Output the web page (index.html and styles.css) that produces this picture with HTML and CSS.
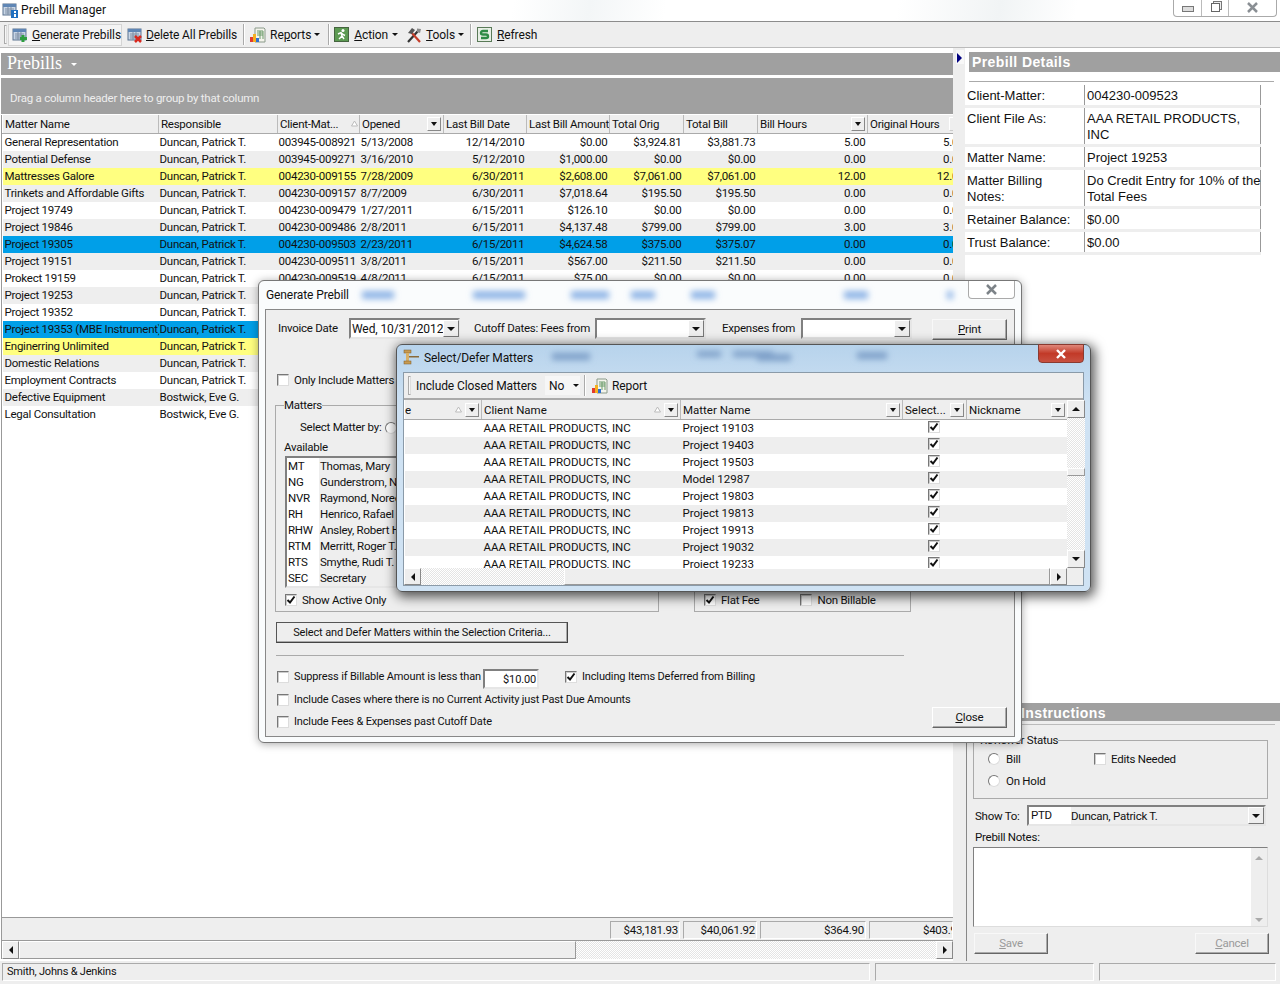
FILE: index.html
```html
<!DOCTYPE html>
<html lang="en">
<head>
  <meta charset="UTF-8">
  <title>Prebill Manager</title>
  <link rel="stylesheet" href="styles.css">
</head>
<body>
  <svg class="defs" width="0" height="0">
    <symbol id="check" viewBox="0 0 12 12"><path d="M2.500 6 L5 8.500 L9.500 2.500" fill="none" stroke="#111" stroke-width="2"/></symbol>
    <symbol id="sheet" viewBox="0 0 16 16">
      <rect x="1" y="2" width="13" height="11" fill="#c9d6e6" stroke="#5b7390"/>
      <rect x="1" y="2" width="13" height="3" fill="#5f86b5"/>
      <path d="M3 7h9M3 9h9M3 11h9M6 5v8M9 5v8" stroke="#7e8fa5" stroke-width="1"/>
    </symbol>
    <symbol id="bars" viewBox="0 0 16 16">
      <path d="M5 1h9l1 1v13H5z" fill="#f4f4ec" stroke="#8a9a8a"/>
      <path d="M7 4h6M7 6h6M7 8h6M10 4v8M13 4v8" stroke="#6a9a6a"/>
      <rect x="0" y="10" width="3" height="5" fill="#e23b2e"/>
      <rect x="3" y="7" width="3" height="8" fill="#f4b020"/>
      <rect x="6" y="11" width="3" height="4" fill="#2f6fd0"/>
    </symbol>
    <symbol id="updown" viewBox="0 0 7 7"><path d="M3.500 1 L6.500 6 H0.500Z" fill="#fff" stroke="#bbb"/></symbol>
  </svg>

  <div class="app">
    <div class="titlebar">
      <svg class="app-icon" width="16" height="16" viewBox="0 0 16 16">
        <use href="#sheet"/>
        <rect x="9" y="8" width="7" height="8" fill="#1f6fc0"/>
        <rect x="12" y="9" width="2" height="2" fill="#fff"/>
        <rect x="12" y="12" width="2" height="3" fill="#fff"/>
      </svg>
      <span class="title-text">Prebill Manager</span>
      <div class="win-buttons">
        <span class="win-btn win-min"><i></i></span>
        <span class="win-btn win-max"><i></i></span>
        <span class="win-btn win-close">
          <svg width="13" height="11" viewBox="0 0 13 11"><path d="M2 1 L11 10 M11 1 L2 10" stroke="#8a8f94" stroke-width="2.500" fill="none"/></svg>
        </span>
      </div>
    </div>

    <div class="toolbar">
      <span class="grip"></span>
      <div class="tool tool-hover">
        <svg width="16" height="16" viewBox="0 0 16 16"><use href="#sheet"/><path d="M11 8v7M8 11.500h7" stroke="#2e9e40" stroke-width="3"/></svg>
        <span><u>G</u>enerate Prebills</span>
      </div>
      <div class="tool tool-delete">
        <svg width="16" height="16" viewBox="0 0 16 16"><use href="#sheet"/><path d="M8 9l6 6M14 9l-6 6" stroke="#d9281e" stroke-width="2.500"/></svg>
        <span><u>D</u>elete All Prebills</span>
      </div>
      <span class="tool-sep sep-a"></span>
      <div class="tool tool-reports">
        <svg width="16" height="16" viewBox="0 0 16 16"><use href="#bars"/></svg>
        <span>Re<u>p</u>orts</span><b class="drop"></b>
      </div>
      <span class="tool-sep sep-b"></span>
      <div class="tool tool-action">
        <svg width="15" height="15" viewBox="0 0 15 15">
          <rect x="0.500" y="0.500" width="14" height="14" fill="#5c9a52" stroke="#45643f"/>
          <circle cx="9" cy="3.500" r="1.500" fill="#fff"/>
          <path d="M4 7l3-1.500 2 2 2 1M7 6l1 3-3 3M8 9l2 3" stroke="#fff" stroke-width="1.400" fill="none"/>
        </svg>
        <span><u>A</u>ction</span><b class="drop"></b>
      </div>
      <div class="tool tool-tools">
        <svg width="16" height="16" viewBox="0 0 16 16">
          <path d="M2 15 L12 4" stroke="#333" stroke-width="2.200"/>
          <path d="M14 15 L5 5" stroke="#c43d2a" stroke-width="2.200"/>
          <path d="M2 6 L6 1 L9 3 L6 7z" fill="#555"/>
          <path d="M11 1.500 L15 2 L14 6 L11 5z" fill="#8a8a8a"/>
        </svg>
        <span><u>T</u>ools</span><b class="drop"></b>
      </div>
      <span class="tool-sep sep-c"></span>
      <div class="tool tool-refresh">
        <svg width="15" height="15" viewBox="0 0 15 15">
          <rect x="0.500" y="0.500" width="14" height="14" fill="#e8efe6" stroke="#5a7a58"/>
          <path d="M11 4 H6 Q4 4 4 6 Q4 7.500 6 7.500 H9 Q11 7.500 11 9.500 Q11 11 9 11 H4" fill="none" stroke="#2e8a46" stroke-width="2.400"/>
        </svg>
        <span><u>R</u>efresh</span>
      </div>
    </div>

    <div class="main">
      <div class="left">
        <div class="section-head">Prebills <b class="drop drop-white"></b></div>
        <div class="group-panel">Drag a column header here to group by that column</div>
        <div class="grid-wrap">
          <table class="grid">
            <colgroup>
              <col class="c1"><col class="c2"><col class="c3"><col class="c4"><col class="c5">
              <col class="c6"><col class="c7"><col class="c8"><col class="c9"><col class="c10">
            </colgroup>
            <thead>
              <tr>
                <th>Matter Name</th>
                <th>Responsible</th>
                <th><span class="th-in">Client-Mat...<svg class="sort" width="7" height="7"><use href="#updown"/></svg></span></th>
                <th><span class="th-in">Opened<i class="hdr-drop"></i></span></th>
                <th>Last Bill Date</th>
                <th>Last Bill Amount</th>
                <th>Total Orig</th>
                <th>Total Bill</th>
                <th><span class="th-in">Bill Hours<i class="hdr-drop"></i></span></th>
                <th><span class="th-in">Original Hours<i class="hdr-drop hdr-faint"></i></span></th>
              </tr>
            </thead>
            <tbody>
              <tr><td>General Representation</td><td>Duncan, Patrick T.</td><td>003945-008921</td><td>5/13/2008</td><td class="num">12/14/2010</td><td class="num">$0.00</td><td class="num">$3,924.81</td><td class="num">$3,881.73</td><td class="num">5.00</td><td class="num">5.00</td></tr>
              <tr><td>Potential Defense</td><td>Duncan, Patrick T.</td><td>003945-009271</td><td>3/16/2010</td><td class="num">5/12/2010</td><td class="num">$1,000.00</td><td class="num">$0.00</td><td class="num">$0.00</td><td class="num">0.00</td><td class="num">0.00</td></tr>
              <tr class="flag"><td>Mattresses Galore</td><td>Duncan, Patrick T.</td><td>004230-009155</td><td>7/28/2009</td><td class="num">6/30/2011</td><td class="num">$2,608.00</td><td class="num">$7,061.00</td><td class="num">$7,061.00</td><td class="num">12.00</td><td class="num">12.00</td></tr>
              <tr><td>Trinkets and Affordable Gifts</td><td>Duncan, Patrick T.</td><td>004230-009157</td><td>8/7/2009</td><td class="num">6/30/2011</td><td class="num">$7,018.64</td><td class="num">$195.50</td><td class="num">$195.50</td><td class="num">0.00</td><td class="num">0.00</td></tr>
              <tr><td>Project 19749</td><td>Duncan, Patrick T.</td><td>004230-009479</td><td>1/27/2011</td><td class="num">6/15/2011</td><td class="num">$126.10</td><td class="num">$0.00</td><td class="num">$0.00</td><td class="num">0.00</td><td class="num">0.00</td></tr>
              <tr><td>Project 19846</td><td>Duncan, Patrick T.</td><td>004230-009486</td><td>2/8/2011</td><td class="num">6/15/2011</td><td class="num">$4,137.48</td><td class="num">$799.00</td><td class="num">$799.00</td><td class="num">3.00</td><td class="num">3.00</td></tr>
              <tr class="sel"><td>Project 19305</td><td>Duncan, Patrick T.</td><td>004230-009503</td><td>2/23/2011</td><td class="num">6/15/2011</td><td class="num">$4,624.58</td><td class="num">$375.00</td><td class="num">$375.07</td><td class="num">0.00</td><td class="num">0.00</td></tr>
              <tr><td>Project 19151</td><td>Duncan, Patrick T.</td><td>004230-009511</td><td>3/8/2011</td><td class="num">6/15/2011</td><td class="num">$567.00</td><td class="num">$211.50</td><td class="num">$211.50</td><td class="num">0.00</td><td class="num">0.00</td></tr>
              <tr><td>Prokect 19159</td><td>Duncan, Patrick T.</td><td>004230-009519</td><td>4/8/2011</td><td class="num">6/15/2011</td><td class="num">$75.00</td><td class="num">$0.00</td><td class="num">$0.00</td><td class="num">0.00</td><td class="num">0.00</td></tr>
              <tr><td>Project 19253</td><td>Duncan, Patrick T.</td><td colspan="8"></td></tr>
              <tr><td>Project 19352</td><td>Duncan, Patrick T.</td><td colspan="8"></td></tr>
              <tr class="sel"><td>Project 19353 (MBE Instrument)</td><td>Duncan, Patrick T.</td><td colspan="8"></td></tr>
              <tr class="flag"><td>Enginerring Unlimited</td><td>Duncan, Patrick T.</td><td colspan="8"></td></tr>
              <tr><td>Domestic Relations</td><td>Duncan, Patrick T.</td><td colspan="8"></td></tr>
              <tr><td>Employment Contracts</td><td>Duncan, Patrick T.</td><td colspan="8"></td></tr>
              <tr><td>Defective Equipment</td><td>Bostwick, Eve G.</td><td colspan="8"></td></tr>
              <tr><td>Legal Consultation</td><td>Bostwick, Eve G.</td><td colspan="8"></td></tr>
            </tbody>
          </table>
        </div>
        <div class="totals">
          <span class="total t1">$43,181.93</span>
          <span class="total t2">$40,061.92</span>
          <span class="total t3">$364.90</span>
          <span class="total t4"><em>$403.90</em></span>
        </div>
        <div class="hscroll">
          <span class="sb-btn"><i class="arr-l"></i></span>
          <span class="sb-thumb main-thumb"></span>
          <span class="sb-track"></span>
          <span class="sb-btn"><i class="arr-r"></i></span>
        </div>
      </div>

      <div class="splitter"><span class="split-tab"><i></i></span></div>

      <div class="right">
        <div class="details">
          <div class="details-head">Prebill Details</div>
          <div class="details-rule"></div>
          <div class="details-table">
            <div class="d-row"><div class="d-label">Client-Matter:</div><div class="d-value">004230-009523</div></div>
            <div class="d-row d-tall"><div class="d-label">Client File As:</div><div class="d-value">AAA RETAIL PRODUCTS,<br>INC</div></div>
            <div class="d-row"><div class="d-label">Matter Name:</div><div class="d-value">Project 19253</div></div>
            <div class="d-row d-tall"><div class="d-label">Matter Billing<br>Notes:</div><div class="d-value">Do Credit Entry for 10% of the<br>Total Fees</div></div>
            <div class="d-row"><div class="d-label">Retainer Balance:</div><div class="d-value">$0.00</div></div>
            <div class="d-row"><div class="d-label">Trust Balance:</div><div class="d-value">$0.00</div></div>
          </div>
        </div>

        <div class="instructions">
          <div class="details-head instr-head">Instructions</div>
          <div class="instr-body">
            <fieldset class="review">
              <legend>Reviewer Status</legend>
              <div class="review-grid">
                <label class="opt"><i class="radio"></i>Bill</label>
                <label class="opt"><i class="cb"></i>Edits Needed</label>
                <label class="opt"><i class="radio"></i>On Hold</label>
              </div>
            </fieldset>
            <div class="show-to">
              <span class="show-label">Show To:</span>
              <div class="sunken show-box">
                <span class="show-code">PTD</span><span class="show-name">Duncan, Patrick T.</span><i class="combo-btn"></i>
              </div>
            </div>
            <div class="notes-label">Prebill Notes:</div>
            <div class="notes">
              <div class="notes-text"></div>
              <div class="notes-scroll"><i class="arr-u grey"></i><i class="arr-d grey"></i></div>
            </div>
            <div class="notes-buttons">
              <span class="btn btn-off"><u>S</u>ave</span>
              <span class="btn btn-off"><u>C</u>ancel</span>
            </div>
          </div>
        </div>
      </div>
    </div>

    <div class="statusbar">
      <span class="status s1">Smith, Johns &amp; Jenkins</span>
      <span class="status s2"></span>
      <span class="status s3"></span>
    </div>
  </div>

  <!-- Generate Prebill window -->
  <div class="window gen">
    <svg class="glass" width="764" height="29">
      <filter id="blur1" x="-30%" y="-100%" width="160%" height="300%"><feGaussianBlur stdDeviation="3"/></filter>
      <g fill="#8db4e6" filter="url(#blur1)">
        <rect x="103" y="10" width="32" height="8"/><rect x="214" y="10" width="52" height="8"/>
        <rect x="312" y="10" width="38" height="8"/><rect x="372" y="10" width="24" height="8"/>
        <rect x="432" y="10" width="24" height="8"/><rect x="585" y="10" width="24" height="8"/>
        <rect x="688" y="10" width="6" height="8"/>
      </g>
    </svg>
    <div class="window-title gen-title">Generate Prebill</div>
    <span class="gen-close">
      <svg width="13" height="11" viewBox="0 0 13 11"><path d="M2 1 L11 10 M11 1 L2 10" stroke="#7d8388" stroke-width="2.500" fill="none"/></svg>
    </span>
    <div class="gen-body">
      <div class="gen-top">
        <span class="lbl-date">Invoice Date</span>
        <div class="sunken combo date-box">Wed, 10/31/2012<i class="combo-btn"></i></div>
        <span class="lbl-cutoff">Cutoff Dates: Fees from</span>
        <div class="sunken combo"><i class="combo-btn"></i></div>
        <span class="lbl-exp">Expenses from</span>
        <div class="sunken combo"><i class="combo-btn"></i></div>
        <span class="btn btn-print"><u>P</u>rint</span>
      </div>
      <label class="opt gen-only"><i class="cb"></i>Only Include Matters</label>
      <div class="gen-mid">
        <fieldset class="matters">
          <legend>Matters</legend>
          <div class="select-by">Select Matter by: <i class="radio"></i></div>
          <div class="avail">Available</div>
          <div class="sunken avail-list">
            <div class="av"><span>MT</span><span>Thomas, Mary</span></div>
            <div class="av"><span>NG</span><span>Gunderstrom, Nate</span></div>
            <div class="av"><span>NVR</span><span>Raymond, Noreen</span></div>
            <div class="av"><span>RH</span><span>Henrico, Rafael</span></div>
            <div class="av"><span>RHW</span><span>Ansley, Robert H.</span></div>
            <div class="av"><span>RTM</span><span>Merritt, Roger T.</span></div>
            <div class="av"><span>RTS</span><span>Smythe, Rudi T.</span></div>
            <div class="av"><span>SEC</span><span>Secretary</span></div>
          </div>
          <label class="opt active-only"><i class="cb"><svg width="12" height="12"><use href="#check"/></svg></i>Show Active Only</label>
        </fieldset>
        <fieldset class="types">
          <label class="opt"><i class="cb"><svg width="12" height="12"><use href="#check"/></svg></i>Flat Fee</label>
          <label class="opt"><i class="cb"></i>Non Billable</label>
        </fieldset>
      </div>
      <span class="btn btn-default">Select and Defer Matters within the Selection Criteria...</span>
      <div class="gen-rule"></div>
      <div class="gen-bottom">
        <div class="gen-opts">
          <div class="suppress">
            <label class="opt opt-suppress"><i class="cb"></i>Suppress if Billable Amount is less than</label>
            <span class="sunken amount">$10.00</span>
            <label class="opt"><i class="cb"><svg width="12" height="12"><use href="#check"/></svg></i>Including Items Deferred from Billing</label>
          </div>
          <label class="opt opt-cases"><i class="cb"></i>Include Cases where there is no Current Activity just Past Due Amounts</label>
          <label class="opt opt-fees"><i class="cb"></i>Include Fees &amp; Expenses past Cutoff Date</label>
        </div>
        <span class="btn btn-close"><u>C</u>lose</span>
      </div>
    </div>
  </div>

  <!-- Select/Defer Matters window -->
  <div class="window sel-win">
    <svg class="glass" width="695" height="28">
      <filter id="blur2" x="-30%" y="-100%" width="160%" height="300%"><feGaussianBlur stdDeviation="3"/></filter>
      <g fill="#7d9fc8" filter="url(#blur2)">
        <rect x="155" y="8" width="38" height="7"/><rect x="360" y="9" width="34" height="7"/>
        <rect x="300" y="6" width="24" height="6"/><rect x="336" y="6" width="40" height="6"/>
        <rect x="460" y="7" width="30" height="7"/>
      </g>
    </svg>
    <div class="sel-head">
      <svg width="16" height="17" viewBox="0 0 16 17">
        <rect x="1" y="1" width="7" height="3" fill="#c89a50" stroke="#7a5a2a" stroke-width="0.500"/>
        <rect x="3" y="4" width="3" height="8" fill="#d8b068"/>
        <rect x="1" y="12" width="7" height="3" fill="#c89a50" stroke="#7a5a2a" stroke-width="0.500"/>
        <rect x="6" y="7" width="10" height="1.500" fill="#8a6a3a"/>
      </svg>
      <span class="window-title">Select/Defer Matters</span>
      <span class="sel-close">
        <svg width="12" height="10" viewBox="0 0 12 10"><path d="M2 1 L10 9 M10 1 L2 9" stroke="#fff" stroke-width="2.400" fill="none"/></svg>
      </span>
    </div>
    <div class="sel-body">
      <div class="sel-toolbar">
        <span class="grip"></span>
        <span class="inc-label">Include Closed Matters</span>
        <span class="inc-value">No<b class="drop"></b></span>
        <span class="tool-sep"></span>
        <svg width="16" height="16" viewBox="0 0 16 16"><use href="#bars"/></svg>
        <span>Report</span>
      </div>
      <div class="sel-gridbox">
        <div class="sel-gridcol">
          <div class="sel-clip">
            <table class="grid sel-grid">
              <colgroup><col class="s1c"><col class="s2c"><col class="s3c"><col class="s4c"><col class="s5c"></colgroup>
              <thead>
                <tr>
                  <th class="clip-left"><span class="th-in"><span>e</span><svg class="sort" width="7" height="7"><use href="#updown"/></svg><i class="hdr-drop"></i></span></th>
                  <th><span class="th-in">Client Name<svg class="sort" width="7" height="7"><use href="#updown"/></svg><i class="hdr-drop"></i></span></th>
                  <th><span class="th-in">Matter Name<i class="hdr-drop"></i></span></th>
                  <th><span class="th-in">Select...<i class="hdr-drop"></i></span></th>
                  <th><span class="th-in">Nickname<i class="hdr-drop"></i></span></th>
                </tr>
              </thead>
              <tbody>
                <tr><td></td><td>AAA RETAIL PRODUCTS, INC</td><td>Project 19103</td><td class="mid"><i class="cb"><svg width="12" height="12"><use href="#check"/></svg></i></td><td></td></tr>
                <tr><td></td><td>AAA RETAIL PRODUCTS, INC</td><td>Project 19403</td><td class="mid"><i class="cb"><svg width="12" height="12"><use href="#check"/></svg></i></td><td></td></tr>
                <tr><td></td><td>AAA RETAIL PRODUCTS, INC</td><td>Project 19503</td><td class="mid"><i class="cb"><svg width="12" height="12"><use href="#check"/></svg></i></td><td></td></tr>
                <tr><td></td><td>AAA RETAIL PRODUCTS, INC</td><td>Model 12987</td><td class="mid"><i class="cb"><svg width="12" height="12"><use href="#check"/></svg></i></td><td></td></tr>
                <tr><td></td><td>AAA RETAIL PRODUCTS, INC</td><td>Project 19803</td><td class="mid"><i class="cb"><svg width="12" height="12"><use href="#check"/></svg></i></td><td></td></tr>
                <tr><td></td><td>AAA RETAIL PRODUCTS, INC</td><td>Project 19813</td><td class="mid"><i class="cb"><svg width="12" height="12"><use href="#check"/></svg></i></td><td></td></tr>
                <tr><td></td><td>AAA RETAIL PRODUCTS, INC</td><td>Project 19913</td><td class="mid"><i class="cb"><svg width="12" height="12"><use href="#check"/></svg></i></td><td></td></tr>
                <tr><td></td><td>AAA RETAIL PRODUCTS, INC</td><td>Project 19032</td><td class="mid"><i class="cb"><svg width="12" height="12"><use href="#check"/></svg></i></td><td></td></tr>
                <tr><td></td><td>AAA RETAIL PRODUCTS, INC</td><td>Project 19233</td><td class="mid"><i class="cb"><svg width="12" height="12"><use href="#check"/></svg></i></td><td></td></tr>
              </tbody>
            </table>
          </div>
          <div class="hscroll sel-h">
            <span class="sb-btn"><i class="arr-l"></i></span>
            <span class="sb-track sel-track"></span>
            <span class="sb-thumb"></span>
            <span class="sb-btn"><i class="arr-r"></i></span>
          </div>
        </div>
        <div class="vscroll">
          <span class="sb-btn v-btn"><i class="arr-u"></i></span>
          <span class="sb-track v-track1"></span>
          <span class="sb-thumb v-thumb"></span>
          <span class="sb-track v-track2"></span>
          <span class="sb-btn v-btn"><i class="arr-d"></i></span>
          <span class="v-corner"></span>
        </div>
      </div>
    </div>
  </div>
</body>
</html>
```

FILE: styles.css
```css
:root {
  --panel: #eeeeee;
  --head: #a0a0a0;
  --line: #999;
  --flag: #ffff80;
  --select: #009fe8;
}

* {
  box-sizing: border-box;
}

body {
  margin: 0;
  width: 1280px;
  height: 984px;
  overflow: hidden;
  background: #fff;
  font-family: Roboto, "Liberation Sans", sans-serif;
  font-size: 11.5px;
  letter-spacing: -0.25px;
  color: #111;
}

.defs {
  display: none;
}

i, em {
  font-style: normal;
}

.app {
  display: flex;
  flex-direction: column;
  height: 984px;
}

/* title bar */
.titlebar {
  display: flex;
  align-items: center;
  height: 22px;
  padding: 0 0 1px 2px;
  border-bottom: 1px solid #8c8c8c;
  background: linear-gradient(100deg, #fff 0 40%, #f3f6f7 46%, #fff 52% 70%, #f1f4f5 78%, #fff 84%);
}

.app-icon {
  margin-right: 3px;
}

.title-text {
  font-size: 12px;
  letter-spacing: 0.1px;
}

.win-buttons {
  display: flex;
  margin-left: auto;
  margin-right: 3px;
  margin-top: -5px;
  height: 18px;
  border: 1px solid #aaa;
  border-top: 0;
  border-radius: 0 0 4px 4px;
}

.win-btn {
  display: flex;
  align-items: center;
  justify-content: center;
  height: 17px;
}

.win-min { width: 28px; border-right: 1px solid #bbb; }
.win-max { width: 27px; border-right: 1px solid #bbb; }
.win-close { width: 47px; }

.win-min i {
  width: 12px;
  height: 6px;
  border: 1px solid #777;
  background: #ddd;
  margin-top: 3px;
}

.win-max i {
  width: 9px;
  height: 9px;
  border: 1px solid #666;
  box-shadow: 2px -2px 0 -1px #eee, 2px -2px 0 0 #777;
}

/* toolbar */
.toolbar {
  position: relative;
  display: flex;
  align-items: center;
  height: 26px;
  padding-left: 4px;
  background: var(--panel);
  border-bottom: 1px solid #bbb;
  font-size: 12px;
  letter-spacing: -0.1px;
}

.grip {
  width: 3px;
  height: 19px;
  border: 1px solid #aaa;
  border-right-color: #ddd;
  background: #f6f6f6;
  margin-right: 1px;
}

.tool {
  display: flex;
  align-items: center;
  gap: 4px;
  height: 22px;
  white-space: nowrap;
}

.tool-hover {
  width: 114px;
  padding-left: 3px;
  background: #f4f4f4;
  border: 1px solid #d4d4d4;
  margin-top: 1px;
}

.tool-delete { margin-left: 5px; gap: 3px; }
.tool-reports { margin-left: 5px; }
.tool-action { margin-left: 4px; gap: 5px; }
.tool-tools { margin-left: 8px; }
.tool-refresh { margin-left: 5px; gap: 5px; }

.tool-sep {
  width: 2px;
  height: 21px;
  border-left: 1px solid #aaa;
  border-right: 1px solid #fff;
}

.sep-a { margin-left: 6px; }
.sep-b { margin-left: 8px; }
.sep-c { margin-left: 6px; }

.drop {
  display: inline-block;
  width: 0;
  height: 0;
  margin-left: -1px;
  border-left: 3px solid transparent;
  border-right: 3px solid transparent;
  border-top: 3px solid #111;
}

.drop-white {
  margin-left: 4px;
  border-top-color: #fff;
  vertical-align: middle;
}

/* main area */
.main {
  display: flex;
  height: 913px;
}

.left {
  display: flex;
  flex-direction: column;
  width: 953px;
  padding: 5px 0 2px 1px;
  background: #fff;
}

.section-head {
  height: 22px;
  line-height: 20px;
  padding-left: 6px;
  background: var(--head);
  color: #fff;
  font-family: "Liberation Serif", serif;
  font-size: 18px;
  letter-spacing: 0;
}

.group-panel {
  height: 36px;
  margin-top: 3px;
  padding: 13px 0 0 9px;
  background: var(--head);
  color: #eee;
}

.grid-wrap {
  flex: 1;
  margin-top: 1px;
  overflow: hidden;
  border-left: 1px solid var(--line);
  border-bottom: 1px solid var(--line);
}

.grid {
  table-layout: fixed;
  border-collapse: collapse;
  width: 964px;
}

.c1 { width: 156px; }
.c2 { width: 119px; }
.c3 { width: 82px; }
.c4 { width: 84px; }
.c5 { width: 83px; }
.c6 { width: 83px; }
.c7 { width: 74px; }
.c8 { width: 74px; }
.c9 { width: 110px; }
.c10 { width: 99px; }

.grid th {
  height: 18px;
  padding: 0 1px 0 2px;
  background: var(--panel);
  border-right: 1px solid #bbb;
  border-bottom: 1px solid #aaa;
  border-left: 1px solid #fff;
  font-weight: normal;
  text-align: left;
  white-space: nowrap;
  overflow: hidden;
}

.th-in {
  display: flex;
  align-items: center;
}

.hdr-drop {
  position: relative;
  display: block;
  width: 14px;
  height: 14px;
  margin-left: auto;
  margin-right: 1px;
  border: 1px solid;
  border-color: #fff #888 #888 #fff;
  flex: none;
}

.hdr-drop::after {
  content: "";
  position: absolute;
  left: 3px;
  top: 4px;
  border-left: 3px solid transparent;
  border-right: 3px solid transparent;
  border-top: 4px solid #111;
}

.hdr-faint {
  margin-left: 9px;
  border-color: #fff #ccc #ccc #fff;
}

.hdr-faint::after {
  display: none;
}

.sort {
  margin-left: auto;
  flex: none;
}

.grid td {
  height: 17px;
  padding: 0 2px 0 1px;
  white-space: nowrap;
  overflow: hidden;
  line-height: 17px;
}

.grid td:first-child {
  padding-left: 2px;
}

.grid tbody tr:nth-child(even) { background: var(--panel); }
.grid tbody tr.flag { background: var(--flag); }
.grid tbody tr.sel { background: var(--select); }

.grid td.num { text-align: right; }

.totals {
  display: flex;
  justify-content: flex-end;
  gap: 3px;
  height: 23px;
  padding: 3px 0 1px;
  background: var(--panel);
  border-left: 1px solid var(--line);
  border-bottom: 1px solid var(--line);
  overflow: hidden;
}

.total {
  height: 18px;
  line-height: 17px;
  padding-right: 1px;
  text-align: right;
  border-left: 1px solid #aaa;
  border-top: 1px solid #aaa;
  border-right: 1px solid #fff;
  border-bottom: 1px solid #fff;
}

.t1 { width: 70px; }
.t2 { width: 74px; }
.t3 { width: 106px; }
.t4 { width: 84px; overflow: hidden; white-space: nowrap; }
.t4 em { display: block; width: 93px; text-align: right; }

.hscroll {
  display: flex;
  height: 18px;
  border-left: 1px solid var(--line);
}

.sb-btn {
  display: flex;
  align-items: center;
  justify-content: center;
  width: 17px;
  flex: none;
  background: var(--panel);
  border: 1px solid;
  border-color: #fff #888 #888 #fff;
}

.sb-thumb {
  background: var(--panel);
  border: 1px solid;
  border-color: #fff #999 #999 #fff;
}

.main-thumb { width: 557px; }

.sb-track {
  flex: 1;
  background: repeating-conic-gradient(#fff 0 25%, #e4e4e4 0 50%) 0 0 / 2px 2px;
}

.arr-l, .arr-r, .arr-u, .arr-d {
  width: 0;
  height: 0;
  display: block;
}

.arr-l { border: 4px solid transparent; border-left: 0; border-right: 4px solid #111; }
.arr-r { border: 4px solid transparent; border-right: 0; border-left: 4px solid #111; }
.arr-u { border: 4px solid transparent; border-top: 0; border-bottom: 4px solid #111; }
.arr-d { border: 4px solid transparent; border-bottom: 0; border-top: 4px solid #111; }
.arr-u.grey { border-bottom-color: #aaa; }
.arr-d.grey { border-top-color: #aaa; }

.splitter {
  width: 12px;
  padding: 2px 0 0 3px;
  background: var(--panel);
}

.split-tab {
  display: block;
  width: 8px;
  height: 14px;
  padding: 3px 0 0 1px;
  background: #f8f8f8;
}

.split-tab i {
  display: block;
  width: 0;
  height: 0;
  border: 5px solid transparent;
  border-right: 0;
  border-left: 5px solid #000080;
}

/* right side */
.right {
  display: flex;
  flex-direction: column;
  width: 315px;
}

.details {
  flex: 1;
  padding-top: 4px;
  background: #fff;
}

.details-head {
  height: 20px;
  margin-left: 4px;
  padding-left: 3px;
  background: var(--head);
  color: #fff;
  font-family: "Liberation Sans", sans-serif;
  font-size: 14px;
  font-weight: bold;
  line-height: 21px;
  letter-spacing: 0.4px;
}

.details-rule {
  height: 1px;
  width: 305px;
  margin: 9px 0 3px 4px;
  background: #aaa;
}

.details-table {
  width: 296px;
  padding-bottom: 3px;
  background: var(--panel);
  font-size: 13px;
  font-family: "Liberation Sans", sans-serif;
  line-height: 16px;
  letter-spacing: 0;
  white-space: nowrap;
}

.d-row {
  display: flex;
  min-height: 20px;
  background: #fff;
  margin-bottom: 3px;
}

.d-row:last-child {
  margin-bottom: 0;
}

.d-tall {
  height: 36px;
}

.d-label {
  width: 120px;
  flex: none;
  padding: 3px 4px 0 2px;
  border-right: 1px solid #999;
}

.d-value {
  flex: 1;
  padding: 3px 0 0 2px;
  border-right: 1px solid #999;
}

.instructions {
  height: 258px;
  background: var(--panel);
}

.instr-head {
  margin-left: 0;
  padding-left: 56px;
  height: 18px;
  line-height: 20px;
}

.instr-body {
  position: relative;
  height: 240px;
  margin-left: 1px;
  padding: 12px 12px 0 6px;
  border-left: 1px solid #888;
}

.instr-body::before {
  content: "";
  position: absolute;
  left: 0;
  right: 5px;
  top: 3px;
  height: 1px;
  background: #bbb;
}

.review {
  margin: 0;
  width: 295px;
  height: 66px;
  border: 1px solid #aaa;
  padding: 5px 0 0 14px;
}

.review legend {
  padding: 0;
  margin-left: -8px;
}

.review-grid {
  display: grid;
  grid-template-columns: 106px auto;
  row-gap: 8px;
}

.opt {
  display: flex;
  align-items: center;
  gap: 5px;
  line-height: 14px;
  white-space: nowrap;
}

.cb {
  display: inline-block;
  width: 12px;
  height: 12px;
  flex: none;
  background: #fff;
  border: 1px solid;
  border-color: #777 #ddd #ddd #777;
  box-shadow: inset 1px 1px 0 #ccc;
  line-height: 0;
}

.cb svg {
  margin: -1px;
}

.radio {
  display: inline-block;
  width: 12px;
  height: 12px;
  flex: none;
  border-radius: 50%;
  background: #fff;
  border: 1px solid;
  border-color: #777 #ddd #ddd #777;
}

.review .opt .radio {
  margin-right: 1px;
}

.sunken {
  background: #fff;
  border: 2px solid;
  border-color: #808080 #e6e6e6 #e6e6e6 #808080;
}

.show-to {
  display: flex;
  align-items: center;
  gap: 8px;
  margin-top: 6px;
  padding-left: 2px;
}

.show-label {
  width: 44px;
  white-space: nowrap;
}

.show-box {
  display: flex;
  align-items: center;
  width: 239px;
  height: 21px;
  background: var(--panel);
}

.show-code {
  width: 42px;
  align-self: stretch;
  padding-left: 2px;
  line-height: 17px;
  background: #fff;
}

.show-name {
  flex: 1;
}

.combo-btn {
  position: relative;
  display: block;
  width: 16px;
  height: 17px;
  flex: none;
  margin-left: auto;
  background: var(--panel);
  border: 1px solid;
  border-color: #fff #777 #777 #fff;
}

.combo-btn::after {
  content: "";
  position: absolute;
  left: 3px;
  top: 6px;
  border-left: 4px solid transparent;
  border-right: 4px solid transparent;
  border-top: 4px solid #111;
}

.notes-label {
  margin-top: 4px;
  padding-left: 2px;
  line-height: 14px;
}

.notes {
  display: flex;
  width: 295px;
  height: 80px;
  margin-top: 3px;
  border: 1px solid;
  border-color: #808080 #ddd #ddd #808080;
}

.notes-text {
  flex: 1;
  background: #fff;
}

.notes-scroll {
  display: flex;
  flex-direction: column;
  justify-content: space-between;
  align-items: center;
  width: 16px;
  padding: 8px 0 4px;
}

.notes-buttons {
  display: flex;
  justify-content: space-between;
  width: 296px;
  margin-top: 6px;
  padding-left: 1px;
}

.btn {
  display: inline-block;
  height: 21px;
  line-height: 19px;
  text-align: center;
  background: var(--panel);
  border: 1px solid;
  border-color: #f8f8f8 #666 #666 #f8f8f8;
  box-shadow: inset -1px -1px 0 #aaa;
}

.btn-off {
  width: 74px;
  color: #9a9a9a;
}

/* status bar */
.statusbar {
  display: flex;
  gap: 5px;
  height: 23px;
  padding: 2px 4px 2px 2px;
  background: var(--panel);
  font-size: 11px;
  letter-spacing: -0.2px;
}

.status {
  height: 18px;
  line-height: 16px;
  padding-left: 4px;
  border: 1px solid;
  border-color: #aaa #fff #fff #aaa;
}

.s1 { width: 868px; }
.s2 { width: 219px; }
.s3 { width: 177px; }

/* floating windows */
.window {
  position: absolute;
  border-radius: 6px;
}

.glass {
  position: absolute;
  left: 0;
  top: 0;
}

.window-title {
  position: relative;
  font-size: 12px;
  letter-spacing: -0.1px;
}

.gen {
  left: 258px;
  top: 280px;
  width: 764px;
  height: 463px;
  padding: 0 6px;
  background: #fafcfd;
  border: 1px solid #777;
  box-shadow: 0 1px 8px rgba(0, 0, 0, 0.35);
}

.gen-title {
  height: 28px;
  padding: 7px 0 0 1px;
}

.gen-close {
  position: absolute;
  right: 6px;
  top: 0;
  display: flex;
  align-items: center;
  justify-content: center;
  width: 47px;
  height: 18px;
  border: 1px solid #aaa;
  border-top: 0;
  border-radius: 0 0 4px 4px;
  background: #fff;
}

.gen-body {
  position: relative;
  height: 428px;
  background: var(--panel);
  border: 1px solid #888;
}

.gen-top {
  display: flex;
  align-items: flex-start;
  height: 30px;
  padding: 8px 0 0 12px;
  white-space: nowrap;
}

.gen-top span {
  line-height: 21px;
}

.lbl-date { width: 71px; }
.lbl-cutoff { width: 121px; margin-left: 14px; }
.lbl-exp { width: 79px; margin-left: 16px; }

.combo {
  display: flex;
  align-items: center;
  width: 111px;
  height: 21px;
  padding-left: 1px;
  white-space: nowrap;
}

.date-box {
  font-size: 12px;
  letter-spacing: -0.1px;
}

.gen-top .btn-print {
  width: 75px;
  margin: 1px 0 0 20px;
  line-height: 19px;
}

.gen-only {
  margin: 33px 0 0 11px;
}

.gen-mid {
  display: flex;
  align-items: flex-end;
  height: 214px;
  margin-top: 11px;
}

.matters {
  width: 384px;
  height: 214px;
  margin: 0 0 0 9px;
  padding: 8px 0 0 8px;
  border: 1px solid #aaa;
}

.matters legend {
  padding: 0;
  line-height: 14px;
}

.select-by {
  padding-left: 16px;
  line-height: 14px;
}

.select-by .radio {
  vertical-align: middle;
  margin-left: 1px;
}

.avail {
  margin-top: 6px;
  line-height: 14px;
}

.avail-list {
  width: 200px;
  height: 132px;
  margin: 2px 0 0 1px;
  background: var(--panel);
  overflow: hidden;
}

.av {
  display: flex;
  height: 16px;
  line-height: 16px;
  white-space: nowrap;
}

.av span:first-child {
  width: 32px;
  flex: none;
  padding-left: 1px;
  background: #fff;
  overflow: hidden;
}

.av span:last-child {
  padding-left: 1px;
}

.active-only {
  margin: 5px 0 0 1px;
}

.types {
  display: flex;
  gap: 41px;
  width: 217px;
  height: 40px;
  margin: 0 0 0 35px;
  padding: 15px 0 0 9px;
  border: 1px solid #aaa;
}

.btn-default {
  display: block;
  width: 292px;
  margin: 10px 0 0 10px;
  border-color: #555 #444 #444 #555;
  font-size: 11px;
  letter-spacing: -0.15px;
  white-space: nowrap;
}

.gen-rule {
  width: 628px;
  height: 1px;
  margin: 12px 0 0 10px;
  background: #aaa;
}

.gen-bottom {
  display: flex;
  padding: 13px 7px 0 11px;
  font-size: 11px;
  letter-spacing: -0.15px;
}

.gen-opts {
  display: flex;
  flex-direction: column;
  align-items: flex-start;
}

.suppress {
  display: flex;
  align-items: flex-start;
  height: 20px;
}

.suppress .opt {
  margin-top: 1px;
}

.opt-suppress {
  width: 200px;
  margin-right: 6px;
}

.amount {
  width: 56px;
  height: 20px;
  line-height: 18px;
  padding-right: 1px;
  text-align: right;
  margin-right: 26px;
}

.opt-cases { margin-top: 4px; }
.opt-fees { margin-top: 8px; }

.btn-close {
  width: 75px;
  margin-left: auto;
  margin-top: 38px;
  border-color: #fff #666 #666 #fff;
  font-size: 11.5px;
}

/* select window */
.sel-win {
  left: 396px;
  top: 344px;
  width: 695px;
  height: 248px;
  padding: 0 6px;
  background: linear-gradient(180deg, #b7d3ec, #cfe2f3 25%, #cfe2f3);
  border: 1px solid #555;
  box-shadow: 2px 3px 12px 2px rgba(0, 0, 0, 0.65);
}

.sel-head {
  position: relative;
  display: flex;
  align-items: center;
  gap: 5px;
  height: 27px;
  padding-bottom: 2px;
}

.sel-close {
  position: absolute;
  right: 0;
  top: -1px;
  display: flex;
  align-items: center;
  justify-content: center;
  width: 46px;
  height: 19px;
  border-radius: 0 0 4px 4px;
  background: linear-gradient(180deg, #e0877a, #c23a28 50%, #c85040);
  border: 1px solid #8a3a30;
}

.sel-body {
  height: 214px;
  border: 1px solid #8a9aa8;
  background: var(--panel);
}

.sel-toolbar {
  display: flex;
  align-items: center;
  height: 27px;
  padding-left: 4px;
  border-bottom: 2px solid #aaa;
  font-size: 12px;
  letter-spacing: -0.1px;
}

.sel-toolbar svg {
  margin: 0 4px 0 6px;
}

.inc-label {
  margin-left: 4px;
}

.inc-value {
  display: flex;
  align-items: center;
  gap: 9px;
  width: 35px;
  height: 19px;
  margin: 0 4px 0 8px;
  padding-left: 4px;
  background: #f6f6f6;
}

.inc-value .drop {
  margin-left: 0;
}

.sel-gridbox {
  display: flex;
  height: 185px;
}

.sel-gridcol {
  width: 663px;
  flex: none;
}

.sel-clip {
  height: 168px;
  overflow: hidden;
  background: #fff;
}

.sel-grid {
  width: 663px;
  letter-spacing: 0;
}

.s1c { width: 77px; }
.s2c { width: 199px; }
.s3c { width: 222px; }
.s4c { width: 64px; }
.s5c { width: 101px; }

.sel-grid th {
  height: 19px;
  padding-top: 1px;
}

.sel-grid th.clip-left {
  padding-left: 0;
}

.sel-grid .sort {
  margin-left: auto;
  margin-right: 3px;
}

.sel-grid .sort + .hdr-drop {
  margin-left: 0;
}

.sel-grid td {
  padding-left: 2px;
}

.sel-grid td.mid {
  text-align: center;
  padding: 0 2px 0 0;
}

.sel-grid td.mid .cb {
  vertical-align: middle;
  margin-top: -2px;
}

.sel-h {
  height: 17px;
  border-left: 0;
}

.sel-track {
  flex: none;
  width: 143px;
}

.sel-h .sb-thumb {
  flex: 1;
}

.vscroll {
  display: flex;
  flex-direction: column;
  width: 18px;
}

.v-btn {
  width: 18px;
  height: 18px;
}

.v-track1 { flex: none; height: 50px; }
.v-thumb { flex: none; height: 8px; }
.v-track2 { flex: none; height: 74px; }
.v-corner { flex: 1; }
```
